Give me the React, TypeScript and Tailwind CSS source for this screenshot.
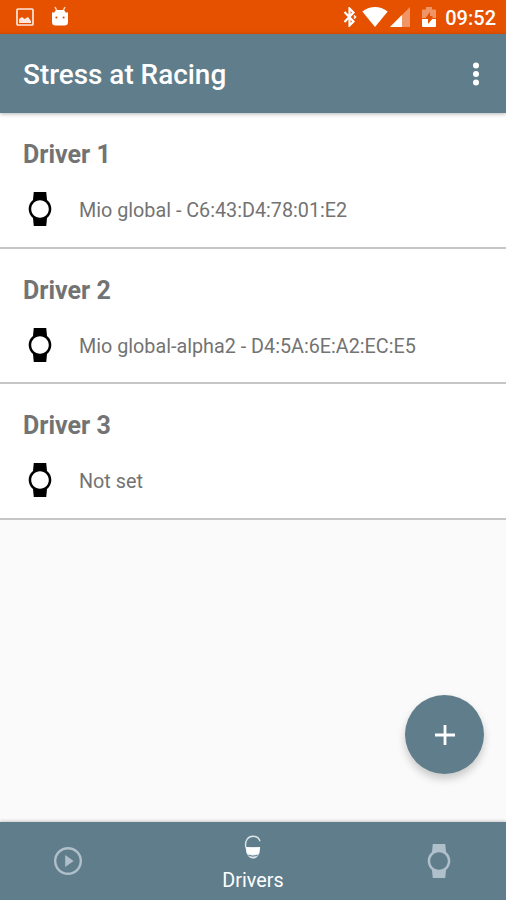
interface Driver {
  id: number
  name: string
  device: string
}

const drivers: Driver[] = [
  { id: 1, name: 'Driver 1', device: 'Mio global - C6:43:D4:78:01:E2' },
  { id: 2, name: 'Driver 2', device: 'Mio global-alpha2 - D4:5A:6E:A2:EC:E5' },
  { id: 3, name: 'Driver 3', device: 'Not set' },
]

function WatchIcon({ className }: { className: string }) {
  return (
    <svg viewBox="0 0 24 24" fill="currentColor" className={className}>
      <path d="M20 12c0-2.54-1.19-4.81-3.04-6.27L16.4 0H7.6l-.55 5.73C5.19 7.19 4 9.45 4 12s1.19 4.81 3.05 6.27L7.6 24h8.8l.56-5.73C18.81 16.81 20 14.54 20 12zM5.8 12c0-3.42 2.78-6.2 6.2-6.2s6.2 2.78 6.2 6.2-2.78 6.2-6.2 6.2-6.2-2.78-6.2-6.2z" />
    </svg>
  )
}

function StatusBar() {
  return (
    <div className="flex h-[34px] shrink-0 items-center bg-[#e65100] text-white">
      <svg viewBox="0 0 18 18" className="ml-4 h-[18px] w-[18px] text-[#ffe6da]">
        <rect x="1" y="1" width="16" height="16" rx="1" fill="none" stroke="currentColor" strokeWidth="1.7" />
        <path d="M3 15v-4l3-2 2.5 2 3.5-2 3 4v2z" fill="currentColor" />
      </svg>
      <svg viewBox="0 0 18 20" className="mb-0.5 ml-[17px] h-5 w-[18px]">
        <path d="M4 1l2 4M14 1l-2 4" stroke="#ffd2b8" strokeWidth="1.6" />
        <path d="M1 6.5h2.2L5 4h8l1.8 2.5H17V16q0 3.5-3.5 3.5h-9Q1 19.5 1 16z" fill="currentColor" />
        <circle cx="5.4" cy="11.5" r="1.1" fill="#e65100" />
        <circle cx="12.6" cy="11.5" r="1.1" fill="#e65100" />
      </svg>

      <div className="mr-2.5 ml-auto flex items-center">
        <svg viewBox="0 0 14 20" className="mr-[3px] h-5 w-3.5">
          <path d="M1.5 5l9 9.5-4 4v-17l4 4L1.5 15" fill="none" stroke="currentColor" strokeWidth="2.2" />
          <path d="M11 8.5l1.500 1.500-1.500 1.500" fill="none" stroke="currentColor" strokeWidth="1.600" />
        </svg>
        <svg viewBox="0 0 26 20" className="ml-0.5 h-5 w-[26px]">
          <path d="M.3 4.5Q13-4.3 25.7 4.5L13 20z" fill="currentColor" />
        </svg>
        <svg viewBox="0 0 20 20" className="ml-0.5 h-5 w-5">
          <path d="M20 0v20H0z" fill="currentColor" opacity=".4" />
          <path d="M12 8v12H0z" fill="currentColor" />
        </svg>
        <svg viewBox="0 0 14 20" className="ml-3 h-5 w-3.5">
          <path d="M0 11V3.5q0-1 1-1h3V0h6v2.5h3q1 0 1 1V11h-3.5V9H8V5l-4.500 6z" fill="currentColor" opacity=".4" />
          <path d="M0 12h6v5l4.200-5H14v7q0 1-1 1H1q-1 0-1-1z" fill="currentColor" />
        </svg>
        <span className="ml-[9px] pt-0.5 text-[20px] leading-none font-medium">09:52</span>
      </div>
    </div>
  )
}

function DriverRow({ driver }: { driver: Driver }) {
  return (
    <li className="h-[135.5px] border-b-2 border-[#c6c6c6] bg-white pt-[26px] pl-[23px]">
      <h2 className="text-[25px] leading-8 font-bold text-[#737373]">{driver.name}</h2>
      <div className="mt-[21px] flex items-center">
        <WatchIcon className="h-[34px] w-[34px] text-black" />
        <span className="ml-[22px] pt-1 text-[19.75px] leading-6 text-[#737373]">{driver.device}</span>
      </div>
    </li>
  )
}

function BottomNav() {
  return (
    <nav className="flex h-[78px] shrink-0 justify-between bg-[#607d8b] shadow-[0_-1px_3px_rgba(0,0,0,0.2)]">
      <button className="flex w-[135px] items-center justify-center text-[#b0c0ca]">
        <svg viewBox="0 0 28 28" className="h-7 w-7">
          <circle cx="14" cy="14" r="12.8" fill="none" stroke="currentColor" strokeWidth="2.4" />
          <path d="M11.2 8v12l8.4-6z" fill="currentColor" />
        </svg>
      </button>
      <button className="flex w-[236px] flex-col items-center pt-[13px] text-white">
        <svg viewBox="0 0 18 25" className="h-[25px] w-[18px]">
          <path d="M1.7 12C.9 5.5 4 1.2 9 1.2c3.4 0 6 1.8 7 5" fill="none" stroke="#dce5e9" strokeWidth="1.4" />
          <path d="M1.3 12h14.8l-.8 6.500Q13 23.500 9 23.500T2.700 18.500z" fill="#dce5e9" />
          <path d="M2 12q7 1.500 14 0l-.8 6q-6 3.500-12.400 0z" fill="currentColor" />
          <path d="M4.500 20.400q4.500 1.500 9 0" fill="none" stroke="#607d8b" strokeWidth="1" />
        </svg>
        <span className="mt-[9px] text-[19.75px] leading-6">Drivers</span>
      </button>
      <button className="flex w-[135px] items-center justify-center text-[#b0c0ca]">
        <WatchIcon className="h-[34px] w-[34px]" />
      </button>
    </nav>
  )
}

export default function App() {
  return (
    <div className="relative flex h-[900px] w-[506px] flex-col overflow-hidden bg-[#fafafa] font-['Roboto',sans-serif]">
      <StatusBar />

      {/* App bar */}
      <header className="z-10 flex h-[79px] shrink-0 items-center justify-between bg-[#607d8b] pr-4 pl-[23px] text-white shadow-[0_1px_4px_rgba(0,0,0,0.3)]">
        <h1 className="pt-[3px] text-[27.9px] leading-8 font-medium">Stress at Racing</h1>
        <svg viewBox="0 0 28 28" fill="currentColor" className="h-7 w-7">
          <circle cx="14" cy="5.5" r="3" />
          <circle cx="14" cy="14" r="3" />
          <circle cx="14" cy="22.5" r="3" />
        </svg>
      </header>

      <ul className="flex-1">
        {drivers.map((driver) => (
          <DriverRow key={driver.id} driver={driver} />
        ))}
      </ul>

      {/* Add driver */}
      <button className="absolute right-[22px] bottom-[126px] flex h-[79px] w-[79px] items-center justify-center rounded-full bg-[#607d8b] text-white shadow-[0_5px_9px_rgba(0,0,0,0.2)]">
        <svg viewBox="0 0 20 20" className="h-5 w-5">
          <path d="M10 0v20M0 10h20" stroke="currentColor" strokeWidth="2.8" />
        </svg>
      </button>

      <BottomNav />
    </div>
  )
}
